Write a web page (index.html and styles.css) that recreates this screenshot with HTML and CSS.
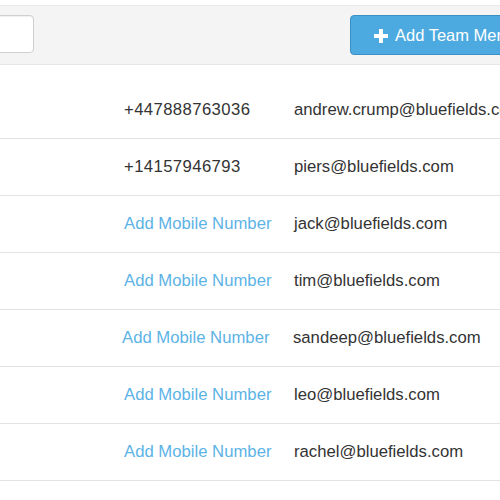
FILE: index.html
```html
<!DOCTYPE html>
<html>
<head>
<meta charset="utf-8">
<link rel="stylesheet" href="styles.css">
</head>
<body>
<div class="page">
  <div class="toolbar">
    <div class="search"></div>
    <button class="add-btn"><svg class="plus" width="16" height="16" viewBox="0 0 16 16"><path d="M8 1v14M1 8h14" stroke="#fff" stroke-width="4"/></svg><span>Add Team Member</span></button>
  </div>
  <div class="table">
    <div class="row"><span class="cell spacer"></span><span class="cell phone num">+447888763036</span><span class="cell email">andrew.crump@bluefields.com</span></div>
    <div class="row"><span class="cell spacer"></span><span class="cell phone num">+14157946793</span><span class="cell email">piers@bluefields.com</span></div>
    <div class="row"><span class="cell spacer"></span><span class="cell phone link">Add Mobile Number</span><span class="cell email">jack@bluefields.com</span></div>
    <div class="row"><span class="cell spacer"></span><span class="cell phone link">Add Mobile Number</span><span class="cell email">tim@bluefields.com</span></div>
    <div class="row"><span class="cell spacer"></span><span class="cell phone link shift">Add Mobile Number</span><span class="cell email shift">sandeep@bluefields.com</span></div>
    <div class="row"><span class="cell spacer"></span><span class="cell phone link">Add Mobile Number</span><span class="cell email">leo@bluefields.com</span></div>
    <div class="row"><span class="cell spacer"></span><span class="cell phone link">Add Mobile Number</span><span class="cell email">rachel@bluefields.com</span></div>
  </div>
</div>
</body>
</html>
```
FILE: styles.css
```css
html, body {
  margin: 0;
  padding: 0;
  background: #fff;
  overflow: hidden;
}
.page {
  width: 500px;
  height: 500px;
  overflow: hidden;
  font-family: "Liberation Sans", Arial, sans-serif;
  color: #333;
}
.toolbar {
  margin-top: 5px;
  background: #f4f4f4;
  border-top: 1px solid #e9e9e9;
  border-bottom: 1px solid #e6e6e6;
  display: flex;
  align-items: flex-start;
  padding-top: 9px;
  box-sizing: border-box;
  height: 60px;
  white-space: nowrap;
}
.search {
  flex-shrink: 0;
  width: 134px;
  height: 38px;
  margin-left: -100px;
  background: #fff;
  border: 1px solid #cfcfcf;
  border-radius: 4px;
  box-sizing: border-box;
  box-shadow: inset 0 1px 1px rgba(0,0,0,0.06);
}
.add-btn {
  margin-left: 316px;
  height: 40px;
  padding: 0 0 0 22px;
  background: #4caae0;
  border: 1px solid #3b8fc4;
  border-radius: 4px;
  display: flex;
  align-items: center;
  gap: 6px;
  color: #fff;
  font-family: "Liberation Sans", Arial, sans-serif;
  font-size: 16.5px;
  white-space: nowrap;
  flex-shrink: 0;
  width: 200px;
}
.plus {
  flex-shrink: 0;
  margin-top: 1px;
}
.table {
  margin-top: 17px;
}
.row {
  display: flex;
  align-items: center;
  height: 57px;
  border-bottom: 1px solid #e2e2e2;
  box-sizing: border-box;
  font-size: 16.7px;
  white-space: nowrap;
}
.spacer {
  width: 124px;
  flex-shrink: 0;
}
.phone {
  width: 170px;
  flex-shrink: 0;
}
.phone.num {
  letter-spacing: 0.4px;
}
.phone.link {
  color: #5cb3e6;
}
.phone.shift {
  margin-left: -2px;
}
.email.shift {
  margin-left: 1px;
}
```
